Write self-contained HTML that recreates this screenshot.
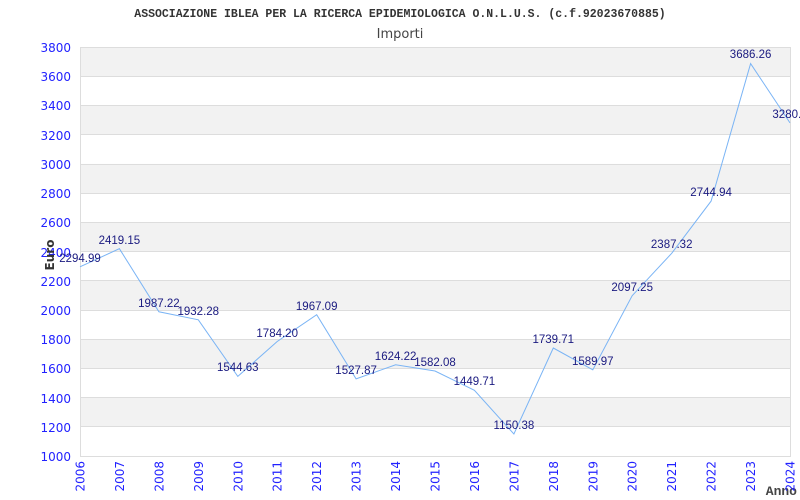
<!DOCTYPE html>
<html><head><meta charset="utf-8"><style>
html,body{margin:0;padding:0;background:#fff;width:800px;height:500px;overflow:hidden}
svg{display:block}
.yl{font:12px "DejaVu Sans",sans-serif;fill:#2222ff;text-anchor:end}
.xl{font:12px "DejaVu Sans",sans-serif;fill:#2222ff;text-anchor:end}
.v{font:11.5px "Liberation Sans",Arial,sans-serif;fill:#1a1a80;text-anchor:middle}
</style></head><body>
<svg width="800" height="500" xmlns="http://www.w3.org/2000/svg">
<text x="400" y="17" text-anchor="middle" style="font:bold 11.5px 'Liberation Mono',monospace;fill:#333">ASSOCIAZIONE IBLEA PER LA RICERCA EPIDEMIOLOGICA O.N.L.U.S. (c.f.92023670885)</text>
<text x="400" y="38" text-anchor="middle" style="font:13px 'DejaVu Sans',sans-serif;fill:#444">Importi</text>
<g fill="#f2f2f2">
<rect x="80" y="47" width="710" height="29.2"/>
<rect x="80" y="105.4" width="710" height="29.2"/>
<rect x="80" y="163.9" width="710" height="29.2"/>
<rect x="80" y="222.3" width="710" height="29.2"/>
<rect x="80" y="280.7" width="710" height="29.2"/>
<rect x="80" y="339.2" width="710" height="29.2"/>
<rect x="80" y="397.6" width="710" height="29.2"/>
</g>
<g stroke="#dddddd" stroke-width="1">
<line x1="80" x2="790" y1="47.5" y2="47.5"/><line x1="80" x2="790" y1="76.5" y2="76.5"/>
<line x1="80" x2="790" y1="105.5" y2="105.5"/><line x1="80" x2="790" y1="134.5" y2="134.5"/>
<line x1="80" x2="790" y1="164.5" y2="164.5"/><line x1="80" x2="790" y1="193.5" y2="193.5"/>
<line x1="80" x2="790" y1="222.5" y2="222.5"/><line x1="80" x2="790" y1="251.5" y2="251.5"/>
<line x1="80" x2="790" y1="280.5" y2="280.5"/><line x1="80" x2="790" y1="310.5" y2="310.5"/>
<line x1="80" x2="790" y1="339.5" y2="339.5"/><line x1="80" x2="790" y1="368.5" y2="368.5"/>
<line x1="80" x2="790" y1="397.5" y2="397.5"/><line x1="80" x2="790" y1="426.5" y2="426.5"/>
<line x1="80" x2="790" y1="456.5" y2="456.5"/>
<line x1="80.5" x2="80.5" y1="47" y2="457"/><line x1="790.5" x2="790.5" y1="47" y2="457"/>
</g>
<g class="yl">
<text x="71" y="52">3800</text><text x="71" y="81">3600</text><text x="71" y="110">3400</text>
<text x="71" y="140">3200</text><text x="71" y="169">3000</text><text x="71" y="198">2800</text>
<text x="71" y="227">2600</text><text x="71" y="257">2400</text><text x="71" y="286">2200</text>
<text x="71" y="315">2000</text><text x="71" y="344">1800</text><text x="71" y="373">1600</text>
<text x="71" y="403">1400</text><text x="71" y="432">1200</text><text x="71" y="461">1000</text>
</g>
<text transform="translate(54,255) rotate(-90)" text-anchor="middle" style="font:bold 12px 'DejaVu Sans',sans-serif;fill:#333">Euro</text>
<text x="797" y="495" text-anchor="end" style="font:bold 13px 'Liberation Mono',monospace;fill:#444">Anno</text>
<polyline fill="none" stroke="#7ab4f5" stroke-width="1" points="80,266.8 119.4,248.7 158.9,311.8 198.3,319.8 237.8,376.4 277.2,341.5 316.7,314.7 356.1,378.9 395.6,364.8 435,371 474.4,390.3 513.9,434 553.3,348 592.8,369.8 632.2,295.7 671.7,253.3 711.1,201.1 750.6,63.6 790,122.9"/>
<g class="v">
<text x="80" y="262">2294.99</text><text x="119.4" y="244">2419.15</text><text x="158.9" y="307">1987.22</text>
<text x="198.3" y="315">1932.28</text><text x="237.8" y="371">1544.63</text><text x="277.2" y="337">1784.20</text>
<text x="316.7" y="310">1967.09</text><text x="356.1" y="374">1527.87</text><text x="395.6" y="360">1624.22</text>
<text x="435" y="366">1582.08</text><text x="474.4" y="385">1449.71</text><text x="513.9" y="429">1150.38</text>
<text x="553.3" y="343">1739.71</text><text x="592.8" y="365">1589.97</text><text x="632.2" y="291">2097.25</text>
<text x="671.7" y="248">2387.32</text><text x="711.1" y="196">2744.94</text><text x="750.6" y="58">3686.26</text>
<text x="790" y="118">3280.3</text>
</g>
<g class="xl">
<text transform="translate(84.5,461) rotate(-90)">2006</text>
<text transform="translate(123.9,461) rotate(-90)">2007</text>
<text transform="translate(163.4,461) rotate(-90)">2008</text>
<text transform="translate(202.8,461) rotate(-90)">2009</text>
<text transform="translate(242.3,461) rotate(-90)">2010</text>
<text transform="translate(281.7,461) rotate(-90)">2011</text>
<text transform="translate(321.2,461) rotate(-90)">2012</text>
<text transform="translate(360.6,461) rotate(-90)">2013</text>
<text transform="translate(400.1,461) rotate(-90)">2014</text>
<text transform="translate(439.5,461) rotate(-90)">2015</text>
<text transform="translate(478.9,461) rotate(-90)">2016</text>
<text transform="translate(518.4,461) rotate(-90)">2017</text>
<text transform="translate(557.8,461) rotate(-90)">2018</text>
<text transform="translate(597.3,461) rotate(-90)">2019</text>
<text transform="translate(636.7,461) rotate(-90)">2020</text>
<text transform="translate(676.2,461) rotate(-90)">2021</text>
<text transform="translate(715.6,461) rotate(-90)">2022</text>
<text transform="translate(755.1,461) rotate(-90)">2023</text>
<text transform="translate(794.5,461) rotate(-90)">2024</text>
</g>
</svg>
</body></html>
